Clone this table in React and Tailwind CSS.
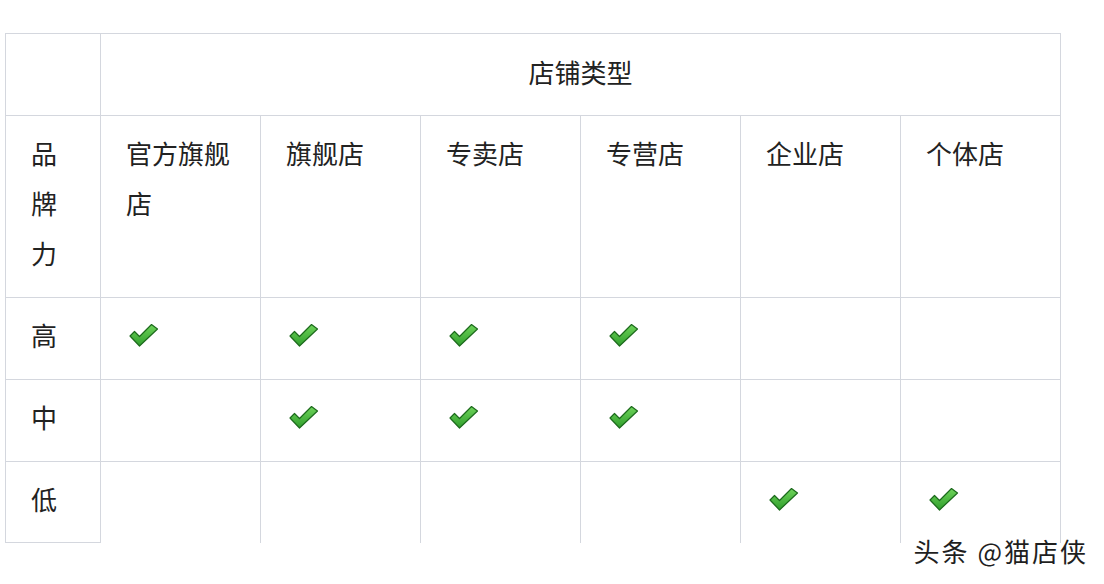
import React from 'react';

const types = ['官方旗舰店', '旗舰店', '专卖店', '专营店', '企业店', '个体店'];

const rows = [
    { label: '高', marks: [true, true, true, true, false, false], h: 'h-[82px]' },
    { label: '中', marks: [false, true, true, true, false, false], h: 'h-[82px]' },
    { label: '低', marks: [false, false, false, false, true, true], h: 'h-[81px]', last: true },
];

const Check = () => (
    <svg width="30" height="24" viewBox="0 0 30 24" aria-hidden="true">
        <defs>
            <linearGradient id="ck" x1="0" y1="0" x2="0" y2="1">
                <stop offset="0" stopColor="#6fd45a" />
                <stop offset="1" stopColor="#2f9e2c" />
            </linearGradient>
        </defs>
        <path
            d="M1 13 L5.5 8.5 L10.5 13.5 L22.5 1.5 L28.5 6 L10.5 23 Z"
            fill="url(#ck)"
            stroke="#1c6a1c"
            strokeWidth="1.2"
            strokeLinejoin="round"
        />
    </svg>
);

const App = () => {
    return (
        <div className="relative w-[1104px] h-[584px] bg-white pt-[33px] pl-[5px] text-[#222] font-['Noto_Sans_CJK_SC','Noto_Sans',sans-serif] overflow-hidden">
            <div className="grid grid-cols-[95px_repeat(6,160px)] border-t border-l border-[#d4d7de] w-[1056px]">
                {/* header */}
                <div className="h-[82px] border-r border-b border-[#d4d7de]" />
                <div className="col-span-6 h-[82px] border-r border-b border-[#d4d7de] flex items-center justify-center pb-[5px] text-[26px] leading-[50px]">
                    店铺类型
                </div>

                {/* store type row */}
                <div className="h-[182px] border-r border-b border-[#d4d7de] pt-[12px] px-[25px] text-[26px] leading-[50px] break-all">
                    品牌力
                </div>
                {types.map((t) => (
                    <div key={t} className="h-[182px] border-r border-b border-[#d4d7de] pt-[12px] pl-[25px] pr-[28px] text-[26px] leading-[50px] break-all">
                        {t}
                    </div>
                ))}

                {/* level rows */}
                {rows.map((r) => (
                    <React.Fragment key={r.label}>
                        <div className={`${r.h} border-r border-b border-[#d4d7de] pt-[12px] px-[25px] text-[26px] leading-[50px]`}>
                            {r.label}
                        </div>
                        {r.marks.map((m, i) => (
                            <div
                                key={i}
                                className={`${r.h} border-r border-[#d4d7de] pt-[25px] pl-[28px] ${r.last ? '' : 'border-b'}`}
                            >
                                {m && <Check />}
                            </div>
                        ))}
                    </React.Fragment>
                ))}
            </div>

            {/* watermark */}
            <div className="absolute top-[535px] right-[16px] text-[26px] leading-[32px] tracking-[2px] text-[#1f1f1f] [text-shadow:0_0_2px_#fff,0_0_3px_#fff]">
                头条 @猫店侠
            </div>
        </div>
    );
};

export default App;
